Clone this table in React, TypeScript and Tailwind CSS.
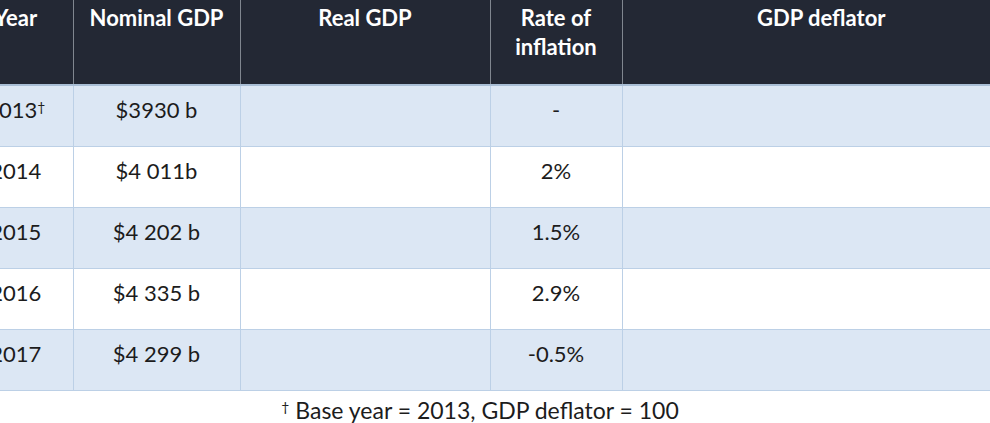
import React from 'react';

const rows = [
  { year: '2013', mark: true, nominal: '$3930 b', rate: '-' },
  { year: '2014', mark: false, nominal: '$4 011b', rate: '2%' },
  { year: '2015', mark: false, nominal: '$4 202 b', rate: '1.5%' },
  { year: '2016', mark: false, nominal: '$4 335 b', rate: '2.9%' },
  { year: '2017', mark: false, nominal: '$4 299 b', rate: '-0.5%' },
];

const App: React.FC = () => {
  return (
    <div className="w-[990px] h-[423px] overflow-hidden bg-white font-['Lato',sans-serif] text-[#1c1c1c]">
      {/* table is wider than the slide crop */}
      <table className="table-fixed border-collapse -ml-[41px] w-[1061px]">
        <colgroup>
          <col className="w-[114px]" />
          <col className="w-[167px]" />
          <col className="w-[250px]" />
          <col className="w-[132px]" />
          <col className="w-[398px]" />
        </colgroup>
        <thead>
          <tr className="h-[85px] bg-[#232834] text-white text-[22px] font-bold leading-[29px] align-top border-b-2 border-[#a9bed5]">
            <th className="pt-[3px] border-r border-[#80868f]">Year</th>
            <th className="pt-[3px] border-r border-[#80868f]">Nominal GDP</th>
            <th className="pt-[3px] border-r border-[#80868f]">Real GDP</th>
            <th className="pt-[3px] border-r border-[#80868f]">
              Rate of
              <br />
              inflation
            </th>
            <th className="pt-[3px]">GDP deflator</th>
          </tr>
        </thead>
        <tbody>
          {rows.map((r, i) => (
            <tr
              key={r.year}
              className={`h-[61px] text-[22px] leading-[29px] align-top text-center border-b border-[#bcd0e6] ${
                i % 2 === 0 ? 'bg-[#dce7f4]' : 'bg-white'
              }`}
            >
              <td className="pt-[9px] border-r border-[#bcd0e6]">
                {r.year}
                {r.mark && <sup className="text-[14px] -top-[6px]">†</sup>}
              </td>
              <td className="pt-[9px] border-r border-[#bcd0e6]">{r.nominal}</td>
              <td className="pt-[9px] border-r border-[#bcd0e6]"></td>
              <td className="pt-[9px] border-r border-[#bcd0e6]">{r.rate}</td>
              <td className="pt-[9px]"></td>
            </tr>
          ))}
        </tbody>
      </table>
      <div className="pt-[4px] pr-[30px] text-center text-[23px] leading-[30px]">
        <sup className="text-[14px]">†</sup> Base year = 2013, GDP deflator = 100
      </div>
    </div>
  );
};

export default App;
